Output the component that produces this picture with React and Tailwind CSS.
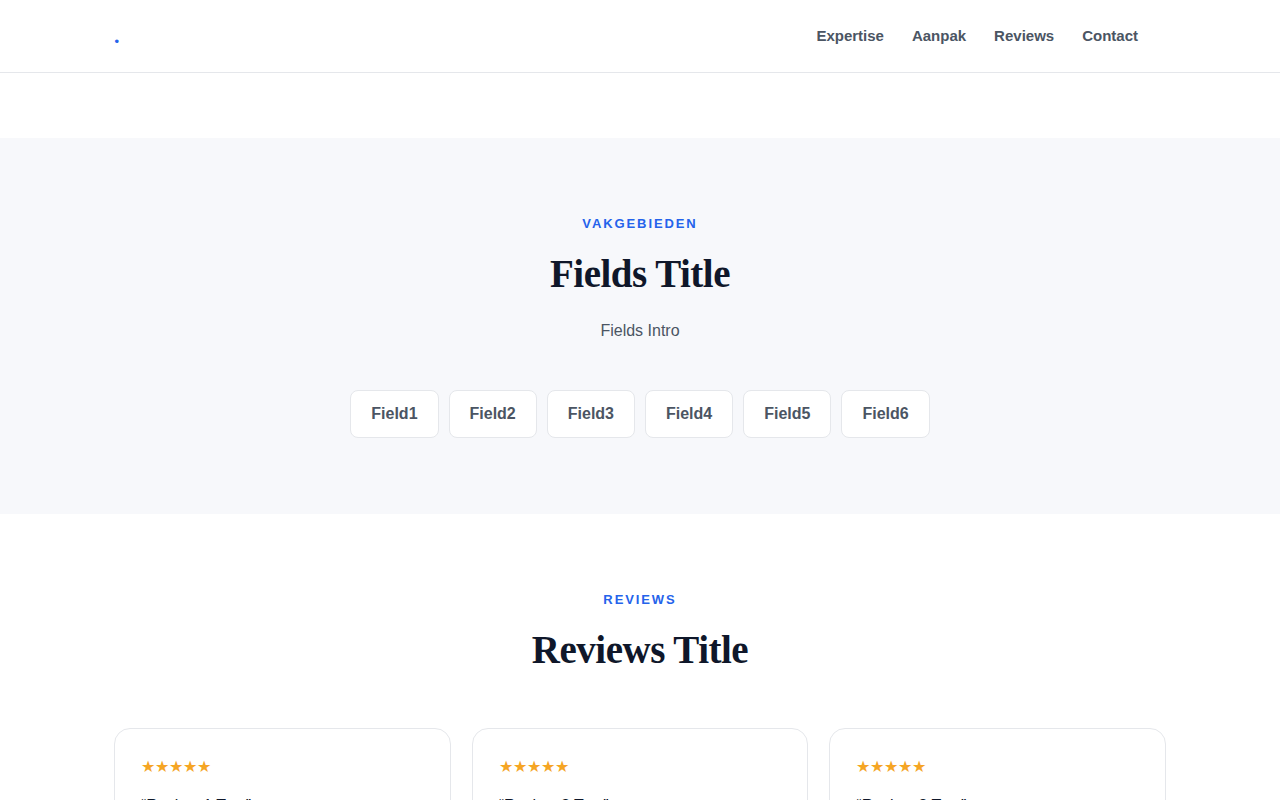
const FIELDS = ["Field1", "Field2", "Field3", "Field4", "Field5", "Field6"];

const REVIEWS = [
  { text: "Review 1 Text" },
  { text: "Review 2 Text" },
  { text: "Review 3 Text" },
];

function SectionHead({ label, title }) {
  return (
    <div className="text-center">
      <p className="text-[13px] font-bold uppercase tracking-[1.9px] text-[#2563eb] leading-5">{label}</p>
      <h2 className="mt-4 font-['Liberation_Serif',serif] text-[39px] font-bold leading-[48px] tracking-[-0.5px] text-[#0f172a]">
        {title}
      </h2>
    </div>
  );
}

export default function App() {
  return (
    <div className="min-h-screen bg-white font-['Liberation_Sans',Arial,sans-serif] text-[#0f172a]">
      <header className="h-[73px] border-b border-[#e5e7eb] bg-white">
        <div className="mx-auto flex h-full max-w-[1100px] items-center justify-between px-6">
          <a className="font-['Liberation_Serif',serif] text-[22px] font-bold leading-none text-[#0f172a]">
            <span className="text-[#2563eb]">.</span>
          </a>
          <nav className="flex items-center gap-7 pr-7 text-[15px] font-bold text-[#4b5563]">
            <a>Expertise</a>
            <a>Aanpak</a>
            <a>Reviews</a>
            <a>Contact</a>
          </nav>
        </div>
      </header>

      <div className="h-[65px]" />

      <section className="bg-[#f7f8fb] pt-[76px] pb-[76px]">
        <div className="mx-auto max-w-[1100px] px-6">
          <SectionHead label="Vakgebieden" title="Fields Title" />
          <p className="mt-[21px] text-center text-base leading-6 text-[#4b5563]">Fields Intro</p>
          <div className="mt-[47px] flex flex-wrap justify-center gap-2.5">
            {FIELDS.map((f) => (
              <span
                key={f}
                className="rounded-lg border border-[#e5e7eb] bg-white px-5 py-[11px] text-base font-bold leading-6 text-[#4b5563]"
              >
                {f}
              </span>
            ))}
          </div>
        </div>
      </section>

      <section className="bg-white pt-[76px] pb-20">
        <div className="mx-auto max-w-[1100px] px-6">
          <SectionHead label="Reviews" title="Reviews Title" />
          <div className="mt-[54px] grid grid-cols-3 gap-[21px]">
            {REVIEWS.map((r) => (
              <div key={r.text} className="rounded-2xl border border-[#e5e7eb] bg-white p-[26px]">
                <div className="text-base leading-6 text-[#f5a524]">★★★★★</div>
                <p className="mt-[15px] text-base leading-6 text-[#0f172a]">“{r.text}”</p>
                <p className="mt-5 text-sm font-bold text-[#0f172a]">Name</p>
              </div>
            ))}
          </div>
        </div>
      </section>
    </div>
  );
}
